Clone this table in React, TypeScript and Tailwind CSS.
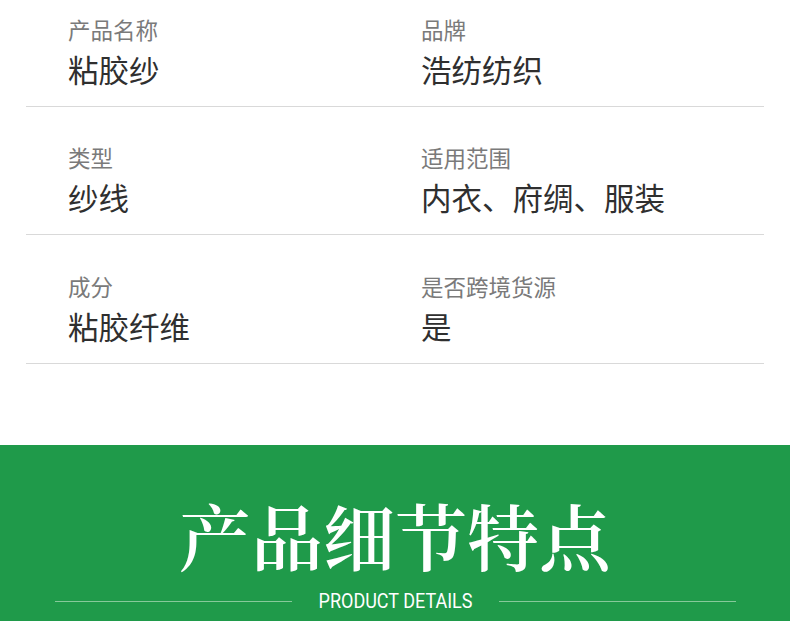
import React from 'react';

type Spec = { label: string; value: string };

const rows: [Spec, Spec][] = [
  [
    { label: '产品名称', value: '粘胶纱' },
    { label: '品牌', value: '浩纺纺织' },
  ],
  [
    { label: '类型', value: '纱线' },
    { label: '适用范围', value: '内衣、府绸、服装' },
  ],
  [
    { label: '成分', value: '粘胶纤维' },
    { label: '是否跨境货源', value: '是' },
  ],
];

const cjk = { fontFamily: '"Noto Sans CJK SC", "Noto Sans", sans-serif' };

const Cell: React.FC<{ spec: Spec; className?: string }> = ({ spec, className }) => (
  <div className={className}>
    <div className="text-[22.5px] leading-[30px] text-[#7a7a7a]">{spec.label}</div>
    <div className="mt-[5px] text-[30.5px] leading-[40px] text-[#2f2f2f]">{spec.value}</div>
  </div>
);

const App: React.FC = () => {
  return (
    <div className="w-[790px] bg-white" style={cjk}>
      <div className="px-[26px]">
        {rows.map((row, i) => (
          <div
            key={i}
            className={`flex border-b border-[#d9d9d9] pb-[17px] pl-[42px] ${i === 0 ? 'pt-[14px]' : i === 2 ? 'pt-[36px]' : 'pt-[35px]'}`}
          >
            <Cell spec={row[0]} className="w-[353px]" />
            <Cell spec={row[1]} className="flex-1" />
          </div>
        ))}
      </div>

      <div className="mt-[81px] bg-[#1f9a4a] pt-[53px] pb-[30px]">
        <h2
          className="text-center text-[72px] leading-[72px] font-semibold text-white"
          style={{ fontFamily: '"Noto Serif CJK SC", "Noto Sans CJK SC", serif' }}
        >
          产品细节特点
        </h2>
        <div className="mt-[19px] flex items-center pl-[55px] pr-[54px]">
          <div className="h-px flex-1 bg-[#86c99a]" />
          <div
            className="mx-[18px] text-[20px] leading-[24px] text-white scale-x-[0.9]"
            style={{ fontFamily: 'Roboto, "Liberation Sans", sans-serif' }}
          >
            PRODUCT DETAILS
          </div>
          <div className="h-px flex-1 bg-[#86c99a]" />
        </div>
      </div>
    </div>
  );
};

export default App;
